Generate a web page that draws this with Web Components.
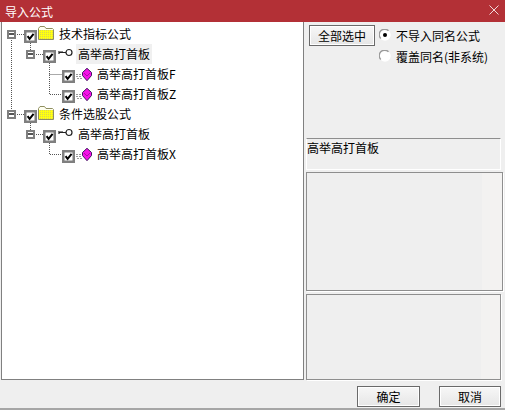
<!DOCTYPE html>
<html lang="zh">
<head>
<meta charset="utf-8">
<title>导入公式</title>
<style>
html, body { margin: 0; height: 100%; overflow: hidden; background: #efefef; }
body { font: 12px "Noto Sans CJK SC", "Liberation Sans", sans-serif; color: #000; }
</style>
</head>
<body>
<import-dialog></import-dialog>

<script>
const CHECK = `<svg width="13" height="13" viewBox="0 0 13 13" style="display:block">
    <rect x="1.25" y="1.25" width="10.5" height="10.5" fill="#fff" stroke="#7f7f7f" stroke-width="2.5"/>
    <path d="M3.6 6.2 L5.6 8.8 L9.6 3.9" fill="none" stroke="#000" stroke-width="2"/>
</svg>`;

const ICONS = {
    folder: `<svg width="16" height="14" viewBox="0 0 16 14" style="display:block;margin-top:-3px">
        <defs><pattern id="dots" width="2" height="2" patternUnits="userSpaceOnUse">
            <rect width="2" height="2" fill="#ffff10"/><rect width="1" height="1" fill="#d8d850"/>
        </pattern></defs>
        <path d="M0.5 13.5 V2.5 L2 0.5 H6.5 L8 2.5 H14.5 L15.5 3.5 V13.5 Z" fill="#fffff0" stroke="#8f8f60"/>
        <rect x="1" y="4" width="14" height="9" fill="url(#dots)"/>
    </svg>`,
    key: `<svg width="17" height="10" viewBox="0 0 17 10" style="display:block;margin-top:-2px">
        <path d="M1 3 V6 M1 4.5 H8" stroke="#222" stroke-width="1.2" fill="none"/>
        <path d="M2 3.5 H5" stroke="#888" fill="none"/>
        <circle cx="11" cy="4.5" r="3" fill="#fff" stroke="#222" stroke-width="1.2"/>
    </svg>`,
    gem: `<svg width="17" height="13" viewBox="0 0 17 13" style="display:block;margin-top:1px">
        <path d="M1 6.5 H7 M1 8.5 H7 M2 10.5 H7" stroke="#9a9a9a" stroke-dasharray="2 1" fill="none"/>
        <path d="M12 0.3 L16.5 4.5 V7.5 L12 12.7 L7.5 7.5 V4.5 Z" fill="#f412e6" stroke="#3d1a5e" stroke-width="1"/>
        <path d="M9 5 L12 8 L15 5" stroke="#9a0a9a" stroke-width="0.8" fill="none"/>
    </svg>`
};

class TreeNode extends HTMLElement {
    constructor() {
        super();
        this.attachShadow({ mode: "open" });
    }

    connectedCallback() {
        const indent = Number(this.getAttribute("indent") || 0);
        const icon = this.getAttribute("icon");
        const expander = this.hasAttribute("expander");
        const selected = this.hasAttribute("selected");

        this.shadowRoot.innerHTML = `
            <style>
                :host { display: flex; align-items: center; height: 20px; padding-left: ${indent}px; }
                .exp { width: 9px; height: 9px; box-sizing: border-box; border: 2px solid #7f7f7f; background: #fff;
                       position: relative; margin-right: 8px; flex: none; }
                .exp::after { content: ""; position: absolute; left: 0; right: 0; top: 1.5px; height: 2px; background: #555; }
                .spacer { width: 17px; flex: none; }
                .box { flex: none; margin: 5px ${icon === "folder" ? 1 : 0}px 0 0; }
                .icon { display: flex; align-items: center; flex: none; margin-left: ${icon === "key" ? 2 : 0}px; }
                .label { margin-left: ${icon === "folder" ? 3 : icon === "key" ? 1 : 3}px; padding: 0 2px; height: 20px; line-height: 19px;
                         white-space: nowrap; ${selected ? "background:#f0f0f0;" : ""} }
            </style>
            ${expander ? '<span class="exp"></span>' : '<span class="spacer"></span>'}
            <span class="box">${CHECK}</span>
            <span class="icon">${ICONS[icon]}</span>
            <span class="label"><slot></slot></span>
        `;
    }
}

class TreeView extends HTMLElement {
    constructor() {
        super();
        this.attachShadow({ mode: "open" });
        this.shadowRoot.innerHTML = `
            <style>
                :host { display: block; position: relative; box-sizing: border-box; width: 303px; height: 358px;
                        background: #fff; border: 1px solid #808080; border-width: 0 1px 1px 1px; padding-top: 2px; }
                svg { position: absolute; left: -2px; top: -22px; }
                .rows { position: relative; }
            </style>
            <svg width="200" height="200" viewBox="0 0 200 200">
                <path d="M11.5 40 V110 M17 34.5 H24 M17 114.5 H24
                         M30.5 43 V50 M30.5 123 V130 M36 54.5 H43 M36 134.5 H43
                         M49.5 63 V94.5 H62 M49.5 74.5 H62
                         M49.5 143 V154.5 H62"
                      fill="none" stroke="#555" stroke-dasharray="1 1"/>
            </svg>
            <div class="rows"><slot></slot></div>
        `;
    }
}

class WinButton extends HTMLElement {
    constructor() {
        super();
        this.attachShadow({ mode: "open" });
        this.shadowRoot.innerHTML = `
            <style>
                :host { display: flex; box-sizing: border-box; align-items: center; justify-content: center;
                        height: 21px; border: 1px solid #6a6a6a; box-shadow: inset 0 0 0 1px #fff;
                        background: linear-gradient(#f7f7f7, #e6e6e6); }
            </style>
            <slot></slot>
        `;
    }
}

class WinRadio extends HTMLElement {
    constructor() {
        super();
        this.attachShadow({ mode: "open" });
        const dot = this.hasAttribute("checked") ? "#000" : "none";
        this.shadowRoot.innerHTML = `
            <style>
                :host { display: flex; align-items: center; height: 20px; gap: 5px; white-space: nowrap; }
                svg { flex: none; }
            </style>
            <svg width="12" height="12" viewBox="0 0 12 12">
                <circle cx="6" cy="6" r="5" fill="#fff" stroke="#fff" stroke-width="1.4"/>
                <path d="M1.8 9.5 A5 5 0 0 1 9.5 1.8" fill="none" stroke="#9a9a9a" stroke-width="1.4"/>
                <circle cx="6" cy="6" r="2" fill="${dot}"/>
            </svg>
            <span><slot></slot></span>
        `;
    }
}

class InfoBox extends HTMLElement {
    constructor() {
        super();
        this.attachShadow({ mode: "open" });
        this.shadowRoot.innerHTML = `
            <style>
                :host { display: block; box-sizing: border-box; line-height: 18px;
                        border: 1px solid #8e8e8e; background: linear-gradient(90deg, #efefef 90%, #f3f2f1 90%);
                        box-shadow: 1px 1px 0 #fff; }
                :host([flat]) { border-color: #fff; border-top-color: #8e8e8e; background: #efefef; box-shadow: none; }
            </style>
            <slot></slot>
        `;
    }
}

class ImportDialog extends HTMLElement {
    constructor() {
        super();
        this.attachShadow({ mode: "open" });
        this.shadowRoot.innerHTML = `
            <style>
                :host { display: flex; flex-direction: column; box-sizing: border-box; width: 505px; height: 410px;
                        background: #efefef; border-bottom: 2px solid #a6a6a6; }
                .title { display: flex; align-items: center; justify-content: space-between; height: 22px; flex: none;
                         background: #b33036; color: #fff; padding: 0 6px 0 5px; }
                .title svg { display: block; margin-bottom: 3px; }
                .main { display: flex; height: 358px; flex: none; padding-left: 1px; }
                .side { display: flex; flex-direction: column; width: 199px; padding-left: 2px; }
                .controls { display: flex; gap: 4px; height: 116px; padding: 3px 0 0 3px; box-sizing: border-box; flex: none; }
                .controls win-button { width: 66px; }
                .radios { display: flex; flex-direction: column; gap: 1px; }
                .b1 { height: 32px; width: 195px; }
                .b2 { height: 119px; width: 197px; margin-top: 2px; }
                .b3 { height: 86px; width: 195px; margin-top: 3px; }
                .footer { display: flex; justify-content: flex-end; gap: 19px; padding: 6px 4px 0 0; }
                .footer win-button { width: 63px; }
                .footer win-button:last-child { width: 62px; }
            </style>
            <div class="title">
                <span>导入公式</span>
                <svg width="10" height="10" viewBox="0 0 10 10"><path d="M0.5 0.5 L9.5 9.5 M9.5 0.5 L0.5 9.5" stroke="#f0d8d8"/></svg>
            </div>
            <div class="main">
                <tree-view>
                    <tree-node icon="folder" indent="5" expander>技术指标公式</tree-node>
                    <tree-node icon="key" indent="24" expander selected>高举高打首板</tree-node>
                    <tree-node icon="gem" indent="43">高举高打首板F</tree-node>
                    <tree-node icon="gem" indent="43">高举高打首板Z</tree-node>
                    <tree-node icon="folder" indent="5" expander>条件选股公式</tree-node>
                    <tree-node icon="key" indent="24" expander>高举高打首板</tree-node>
                    <tree-node icon="gem" indent="43">高举高打首板X</tree-node>
                </tree-view>
                <div class="side">
                    <div class="controls">
                        <win-button>全部选中</win-button>
                        <div class="radios">
                            <win-radio checked>不导入同名公式</win-radio>
                            <win-radio>覆盖同名(非系统)</win-radio>
                        </div>
                    </div>
                    <info-box class="b1" flat>高举高打首板</info-box>
                    <info-box class="b2"></info-box>
                    <info-box class="b3"></info-box>
                </div>
            </div>
            <div class="footer">
                <win-button>确定</win-button>
                <win-button>取消</win-button>
            </div>
        `;
    }
}

customElements.define("tree-node", TreeNode);
customElements.define("tree-view", TreeView);
customElements.define("win-button", WinButton);
customElements.define("win-radio", WinRadio);
customElements.define("info-box", InfoBox);
customElements.define("import-dialog", ImportDialog);
</script>
</body>
</html>
